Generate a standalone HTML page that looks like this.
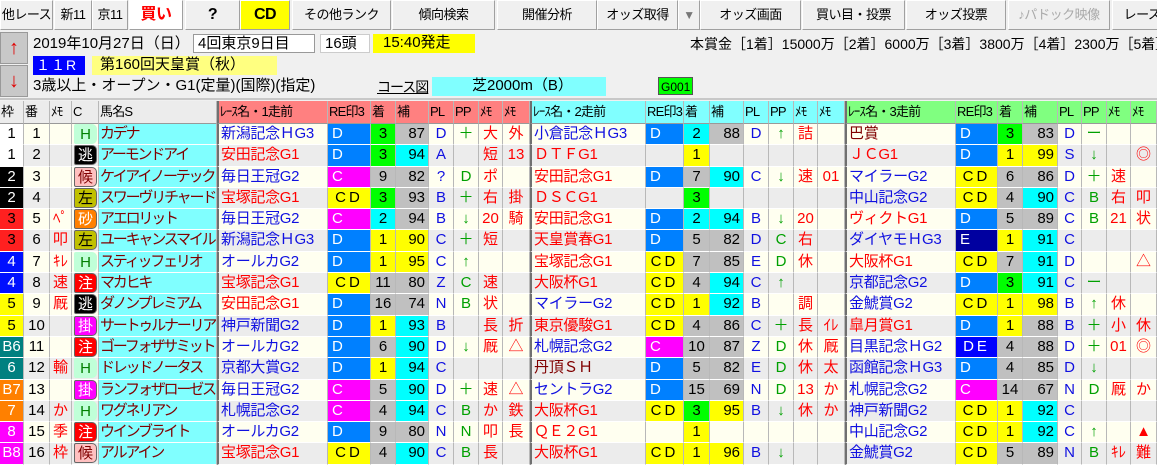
<!DOCTYPE html>
<html><head><meta charset="utf-8">
<style>
*{box-sizing:border-box;margin:0;padding:0}
body{width:1157px;height:464px;overflow:hidden;background:#f0f0f0;font-family:"Liberation Sans","Noto Sans CJK JP",sans-serif;font-size:15px;color:#000;position:relative}
.bt{position:absolute;top:0;height:30px;background:#f0f0f0;border:1px solid #a0a0a0;border-top-color:#fff;border-left-color:#fff;font-size:13px;text-align:center;line-height:28px;white-space:nowrap;overflow:hidden;letter-spacing:-0.5px}
.ab{position:absolute;left:0;width:28px;height:32px;background:#c8c8c8;border:1px solid #999;color:#e00000;text-align:center;font-size:20px;line-height:30px;font-weight:bold}
.t{position:absolute;white-space:nowrap;font-size:15px;line-height:18px}
.bx{position:absolute;height:19px;line-height:18px;font-size:15px;white-space:nowrap;padding-left:4px;overflow:hidden}
#g{position:absolute;left:0;top:101px;width:1157px;display:grid;grid-template-columns:24px 26px 22px 27px 118px 111px 43px 25px 33px 25px 25px 24px 27px 116px 38px 26px 34px 25px 25px 24px 27px 111px 42px 25px 35px 24px 25px 24px 26px;grid-template-rows:23px repeat(16,21.3px)}
.r{display:contents}
.ro{--bg:#fffff0}.re{--bg:#ececec}
#g i{font-style:normal;background:var(--bg);border-right:1px solid #b8b8b8;border-bottom:1px solid #fff;white-space:nowrap;overflow:hidden;line-height:20px;padding:0 2px;text-align:center;font-size:15px}
#g .H{background:#ececec;font-size:13px;text-align:left;border-bottom:1px solid #999;line-height:21px;letter-spacing:-0.8px;padding:0 1px}
#g .H1{background:#ff8080}#g .H2{background:#80ffff}#g .H3{background:#80ff80}
#g .s{border-left:2px solid #707070}
#g .f1{background:#fff}#g .f2{background:#000;color:#fff}#g .f3{background:#ff2020;color:#000}#g .f4{background:#0010ff;color:#fff}#g .f5{background:#ffff00}#g .f6{background:#008080;color:#fff}#g .f7{background:#ff8000;color:#fff}#g .f8{background:#ff00ff;color:#fff}
#g .nm{background:#80ffff;color:#800000;text-align:left;letter-spacing:-2.2px;padding-left:1px;font-size:15px}
#g .bb,#g .br,#g .bm{text-align:left;letter-spacing:-0.3px}
.bb{color:#1010e0}.br{color:#ff0000}.bm{color:#800000}
#g .D{background:#0080ff;color:#fff;text-align:left;padding-left:4px}
#g .C{background:#ff00ff;color:#fff;text-align:left;padding-left:4px}
#g .CD{background:#ffff00;color:#000;letter-spacing:3px}
#g .E{background:#0000a0;color:#fff;text-align:left;padding-left:4px}
#g .DE{background:#0000ff;color:#fff;letter-spacing:3px}
#g .y{background:#ffff00}#g .c{background:#00ffff}#g .g{background:#00ff00}#g .k{background:#c0c0c0}
#g .v{text-align:right;padding-right:3px}
.p{color:#1010e0}.q{color:#00a000}.m{color:#ff0000}
#g .bc{padding:0 0 0 2px;text-align:left}
.bd{display:inline-block;width:23px;height:20px;line-height:19px;border-radius:2px 5px 5px 2px;font-size:15px;text-align:center;border:1px solid #666;vertical-align:top}
.bH{background:#c0ffd8;color:#008000;border-color:#c0ffd8}.bN{background:#000;color:#fff}.bK{background:#ffc0c0;color:#800000}.bL{background:#c0c000;color:#000}.bS{background:#ff8000;color:#fff}.bC{background:#ff0000;color:#fff}.bM{background:#ff00ff;color:#fff}
</style></head><body>
<div class="bt" style="left:0;width:53px">他レース</div>
<div class="bt" style="left:54px;width:38px">新11</div>
<div class="bt" style="left:92px;width:36px">京11</div>
<div class="bt" style="left:129px;width:54px;background:#fff;color:#f00;font-weight:bold;font-size:16px">買い</div>
<div class="bt" style="left:185px;width:55px;font-weight:bold;font-size:16px">?</div>
<div class="bt" style="left:240px;width:50px;background:#ffff00;font-weight:bold;font-size:16px">CD</div>
<div class="bt" style="left:292px;width:99px">その他ランク</div>
<div class="bt" style="left:392px;width:103px">傾向検索</div>
<div class="bt" style="left:497px;width:100px">開催分析</div>
<div class="bt" style="left:597px;width:81px">オッズ取得</div>
<div class="bt" style="left:678px;width:22px;color:#777;font-size:12px">▼</div>
<div class="bt" style="left:700px;width:101px">オッズ画面</div>
<div class="bt" style="left:802px;width:103px">買い目・投票</div>
<div class="bt" style="left:906px;width:100px">オッズ投票</div>
<div class="bt" style="left:1008px;width:102px;color:#aaa">♪パドック映像</div>
<div class="bt" style="left:1112px;width:60px">レース</div>

<div class="ab" style="top:32px">↑</div>
<div class="ab" style="top:65px">↓</div>
<div class="t" style="left:33px;top:35px">2019年10月27日（日）</div>
<div class="bx" style="left:193px;top:34px;width:122px;background:#fff;border:1px solid #999">4回東京9日目</div>
<div class="bx" style="left:320px;top:34px;width:50px;background:#fff;border:1px solid #ccc">16頭</div>
<div class="bx" style="left:373px;top:34px;width:102px;background:#ffff00;padding-left:10px">15:40発走</div>
<div class="bx" style="left:33px;top:56px;width:52px;background:#0000ff;color:#fff;letter-spacing:1px;font-size:14px;padding-left:3px">１１R</div>
<div class="bx" style="left:92px;top:56px;width:185px;background:#ffff80;padding-left:8px">第160回天皇賞（秋）</div>
<div class="t" style="left:33px;top:77px">3歳以上・オープン・G1(定量)(国際)(指定)</div>
<div class="t" style="left:377px;top:78px;text-decoration:underline;font-size:14px;letter-spacing:-1px">コース図</div>
<div class="bx" style="left:432px;top:77px;width:174px;background:#80ffff;padding-left:40px">芝2000m（B）</div>
<div class="bx" style="left:658px;top:77px;width:35px;height:18px;background:#00ff00;border:1px solid #555;font-size:12px;padding-left:2px">G001</div>
<div class="t" style="left:690px;top:35px;font-size:14px">本賞金［1着］15000万［2着］6000万［3着］3800万［4着］2300万［5着］1500万</div>
<div style="position:absolute;left:0;top:98px;width:1157px;height:2px;background:#c8c8c8"></div>

<div id="g">
<div class="r"><i class="H">枠</i><i class="H">番</i><i class="H">ﾒﾓ</i><i class="H">C</i><i class="H">馬名S</i><i class="H H1 s">ﾚｰｽ名・1走前</i><i class="H H1">RE印3</i><i class="H H1">着</i><i class="H H1">補</i><i class="H H1">PL</i><i class="H H1">PP</i><i class="H H1">ﾒﾓ</i><i class="H H1">ﾒﾓ</i><i class="H H2 s">ﾚｰｽ名・2走前</i><i class="H H2">RE印3</i><i class="H H2">着</i><i class="H H2">補</i><i class="H H2">PL</i><i class="H H2">PP</i><i class="H H2">ﾒﾓ</i><i class="H H2">ﾒﾓ</i><i class="H H3 s">ﾚｰｽ名・3走前</i><i class="H H3">RE印3</i><i class="H H3">着</i><i class="H H3">補</i><i class="H H3">PL</i><i class="H H3">PP</i><i class="H H3">ﾒﾓ</i><i class="H H3">ﾒﾓ</i></div>

<div class="r ro"><i class="f1">1</i><i>1</i><i class="m"></i><i class="bc"><span class="bd bH">H</span></i><i class="nm">カデナ</i><i class="bb s">新潟記念ＨG3</i><i class="D">D</i><i class="g">3</i><i class="k v">87</i><i class="p">D</i><i class="q">＋</i><i class="m">大</i><i class="m">外</i><i class="bb s">小倉記念ＨG3</i><i class="D">D</i><i class="c">2</i><i class="k v">88</i><i class="p">D</i><i class="q">↑</i><i class="m">詰</i><i class="m"></i><i class="bm s">巴賞</i><i class="D">D</i><i class="g">3</i><i class="k v">83</i><i class="p">D</i><i class="q">ー</i><i class="m"></i><i class="m"></i></div>

<div class="r re"><i class="f1">1</i><i>2</i><i class="m"></i><i class="bc"><span class="bd bN">逃</span></i><i class="nm">アーモンドアイ</i><i class="br s">安田記念G1</i><i class="D">D</i><i class="g">3</i><i class="c v">94</i><i class="p">A</i><i class="q"></i><i class="m">短</i><i class="m">13</i><i class="br s">ＤＴＦG1</i><i></i><i class="y">1</i><i></i><i></i><i></i><i></i><i></i><i class="br s">ＪＣG1</i><i class="D">D</i><i class="y">1</i><i class="y v">99</i><i class="p">S</i><i class="q">↓</i><i class="m"></i><i class="m">◎</i></div>

<div class="r ro"><i class="f2">2</i><i>3</i><i class="m"></i><i class="bc"><span class="bd bK">候</span></i><i class="nm">ケイアイノーテック</i><i class="bb s">毎日王冠G2</i><i class="C">C</i><i class="k">9</i><i class="k v">82</i><i class="p">?</i><i class="q">D</i><i class="m">ポ</i><i class="m"></i><i class="br s">安田記念G1</i><i class="D">D</i><i class="k">7</i><i class="c v">90</i><i class="p">C</i><i class="q">↓</i><i class="m">速</i><i class="m">01</i><i class="bb s">マイラーG2</i><i class="CD">CD</i><i class="k">6</i><i class="k v">86</i><i class="p">D</i><i class="q">＋</i><i class="m">速</i><i class="m"></i></div>

<div class="r re"><i class="f2">2</i><i>4</i><i class="m"></i><i class="bc"><span class="bd bL">左</span></i><i class="nm">スワーヴリチャード</i><i class="br s">宝塚記念G1</i><i class="CD">CD</i><i class="g">3</i><i class="k v">93</i><i class="p">B</i><i class="q">＋</i><i class="m">右</i><i class="m">掛</i><i class="br s">ＤＳＣG1</i><i></i><i class="g">3</i><i></i><i></i><i></i><i></i><i></i><i class="bb s">中山記念G2</i><i class="CD">CD</i><i class="k">4</i><i class="c v">90</i><i class="p">C</i><i class="q">B</i><i class="m">右</i><i class="m">叩</i></div>

<div class="r ro"><i class="f3">3</i><i>5</i><i class="m">ﾍﾟ</i><i class="bc"><span class="bd bS">砂</span></i><i class="nm">アエロリット</i><i class="bb s">毎日王冠G2</i><i class="C">C</i><i class="c">2</i><i class="k v">94</i><i class="p">B</i><i class="q">↓</i><i class="m">20</i><i class="m">騎</i><i class="br s">安田記念G1</i><i class="D">D</i><i class="c">2</i><i class="c v">94</i><i class="p">B</i><i class="q">↓</i><i class="m">20</i><i class="m"></i><i class="br s">ヴィクトG1</i><i class="D">D</i><i class="k">5</i><i class="k v">89</i><i class="p">C</i><i class="q">B</i><i class="m">21</i><i class="m">状</i></div>

<div class="r re"><i class="f3">3</i><i>6</i><i class="m">叩</i><i class="bc"><span class="bd bL">左</span></i><i class="nm">ユーキャンスマイル</i><i class="bb s">新潟記念ＨG3</i><i class="D">D</i><i class="y">1</i><i class="y v">90</i><i class="p">C</i><i class="q">＋</i><i class="m">短</i><i class="m"></i><i class="br s">天皇賞春G1</i><i class="D">D</i><i class="k">5</i><i class="k v">82</i><i class="p">D</i><i class="q">C</i><i class="m">右</i><i class="m"></i><i class="bb s">ダイヤモＨG3</i><i class="E">E</i><i class="y">1</i><i class="c v">91</i><i class="p">C</i><i class="q"></i><i class="m"></i><i class="m"></i></div>

<div class="r ro"><i class="f4">4</i><i>7</i><i class="m">ｷﾚ</i><i class="bc"><span class="bd bH">H</span></i><i class="nm">スティッフェリオ</i><i class="bb s">オールカG2</i><i class="D">D</i><i class="y">1</i><i class="y v">95</i><i class="p">C</i><i class="q">↑</i><i class="m"></i><i class="m"></i><i class="br s">宝塚記念G1</i><i class="CD">CD</i><i class="k">7</i><i class="k v">85</i><i class="p">E</i><i class="q">D</i><i class="m">休</i><i class="m"></i><i class="br s">大阪杯G1</i><i class="CD">CD</i><i class="k">7</i><i class="c v">91</i><i class="p">D</i><i class="q"></i><i class="m"></i><i class="m">△</i></div>

<div class="r re"><i class="f4">4</i><i>8</i><i class="m">速</i><i class="bc"><span class="bd bC">注</span></i><i class="nm">マカヒキ</i><i class="br s">宝塚記念G1</i><i class="CD">CD</i><i class="k">11</i><i class="k v">80</i><i class="p">Z</i><i class="q">C</i><i class="m">速</i><i class="m"></i><i class="br s">大阪杯G1</i><i class="CD">CD</i><i class="k">4</i><i class="c v">94</i><i class="p">C</i><i class="q">↑</i><i class="m"></i><i class="m"></i><i class="bb s">京都記念G2</i><i class="D">D</i><i class="g">3</i><i class="c v">91</i><i class="p">C</i><i class="q">ー</i><i class="m"></i><i class="m"></i></div>

<div class="r ro"><i class="f5">5</i><i>9</i><i class="m">厩</i><i class="bc"><span class="bd bN">逃</span></i><i class="nm">ダノンプレミアム</i><i class="br s">安田記念G1</i><i class="D">D</i><i class="k">16</i><i class="k v">74</i><i class="p">N</i><i class="q">B</i><i class="m">状</i><i class="m"></i><i class="bb s">マイラーG2</i><i class="CD">CD</i><i class="y">1</i><i class="c v">92</i><i class="p">B</i><i class="q"></i><i class="m">調</i><i class="m"></i><i class="bb s">金鯱賞G2</i><i class="CD">CD</i><i class="y">1</i><i class="y v">98</i><i class="p">B</i><i class="q">↑</i><i class="m">休</i><i class="m"></i></div>

<div class="r re"><i class="f5">5</i><i>10</i><i class="m"></i><i class="bc"><span class="bd bM">掛</span></i><i class="nm">サートゥルナーリア</i><i class="bb s">神戸新聞G2</i><i class="D">D</i><i class="y">1</i><i class="c v">93</i><i class="p">B</i><i class="q"></i><i class="m">長</i><i class="m">折</i><i class="br s">東京優駿G1</i><i class="CD">CD</i><i class="k">4</i><i class="k v">86</i><i class="p">C</i><i class="q">＋</i><i class="m">長</i><i class="m">ｲﾚ</i><i class="br s">皐月賞G1</i><i class="D">D</i><i class="y">1</i><i class="k v">88</i><i class="p">B</i><i class="q">＋</i><i class="m">小</i><i class="m">休</i></div>

<div class="r ro"><i class="f6">B6</i><i>11</i><i class="m"></i><i class="bc"><span class="bd bC">注</span></i><i class="nm">ゴーフォザサミット</i><i class="bb s">オールカG2</i><i class="D">D</i><i class="k">6</i><i class="c v">90</i><i class="p">D</i><i class="q">↓</i><i class="m">厩</i><i class="m">△</i><i class="bb s">札幌記念G2</i><i class="C">C</i><i class="k">10</i><i class="k v">87</i><i class="p">Z</i><i class="q">D</i><i class="m">休</i><i class="m">厩</i><i class="bb s">目黒記念ＨG2</i><i class="DE">DE</i><i class="k">4</i><i class="k v">88</i><i class="p">D</i><i class="q">＋</i><i class="m">01</i><i class="m">◎</i></div>

<div class="r re"><i class="f6">6</i><i>12</i><i class="m">輸</i><i class="bc"><span class="bd bH">H</span></i><i class="nm">ドレッドノータス</i><i class="bb s">京都大賞G2</i><i class="D">D</i><i class="y">1</i><i class="c v">94</i><i class="p">C</i><i class="q"></i><i class="m"></i><i class="m"></i><i class="bm s">丹頂ＳＨ</i><i class="D">D</i><i class="k">5</i><i class="k v">82</i><i class="p">E</i><i class="q">D</i><i class="m">休</i><i class="m">太</i><i class="bb s">函館記念ＨG3</i><i class="D">D</i><i class="k">4</i><i class="k v">85</i><i class="p">D</i><i class="q">↓</i><i class="m"></i><i class="m"></i></div>

<div class="r ro"><i class="f7">B7</i><i>13</i><i class="m"></i><i class="bc"><span class="bd bM">掛</span></i><i class="nm">ランフォザローゼス</i><i class="bb s">毎日王冠G2</i><i class="C">C</i><i class="k">5</i><i class="c v">90</i><i class="p">D</i><i class="q">＋</i><i class="m">速</i><i class="m">△</i><i class="bb s">セントラG2</i><i class="D">D</i><i class="k">15</i><i class="k v">69</i><i class="p">N</i><i class="q">D</i><i class="m">13</i><i class="m">か</i><i class="bb s">札幌記念G2</i><i class="C">C</i><i class="k">14</i><i class="k v">67</i><i class="p">N</i><i class="q">D</i><i class="m">厩</i><i class="m">か</i></div>

<div class="r re"><i class="f7">7</i><i>14</i><i class="m">か</i><i class="bc"><span class="bd bH">H</span></i><i class="nm">ワグネリアン</i><i class="bb s">札幌記念G2</i><i class="C">C</i><i class="k">4</i><i class="c v">94</i><i class="p">C</i><i class="q">B</i><i class="m">か</i><i class="m">鉄</i><i class="br s">大阪杯G1</i><i class="CD">CD</i><i class="g">3</i><i class="y v">95</i><i class="p">B</i><i class="q">↓</i><i class="m">休</i><i class="m">か</i><i class="bb s">神戸新聞G2</i><i class="CD">CD</i><i class="y">1</i><i class="c v">92</i><i class="p">C</i><i class="q"></i><i class="m"></i><i class="m"></i></div>

<div class="r ro"><i class="f8">8</i><i>15</i><i class="m">季</i><i class="bc"><span class="bd bC">注</span></i><i class="nm">ウインブライト</i><i class="bb s">オールカG2</i><i class="D">D</i><i class="k">9</i><i class="k v">80</i><i class="p">N</i><i class="q">N</i><i class="m">叩</i><i class="m">長</i><i class="br s">ＱＥ２G1</i><i></i><i class="y">1</i><i></i><i></i><i></i><i></i><i></i><i class="bb s">中山記念G2</i><i class="CD">CD</i><i class="y">1</i><i class="c v">92</i><i class="p">C</i><i class="q">↑</i><i class="m"></i><i class="m">▲</i></div>

<div class="r re"><i class="f8">B8</i><i>16</i><i class="m">枠</i><i class="bc"><span class="bd bK">候</span></i><i class="nm">アルアイン</i><i class="br s">宝塚記念G1</i><i class="CD">CD</i><i class="k">4</i><i class="c v">90</i><i class="p">C</i><i class="q">B</i><i class="m">長</i><i class="m"></i><i class="br s">大阪杯G1</i><i class="CD">CD</i><i class="y">1</i><i class="y v">96</i><i class="p">B</i><i class="q">↓</i><i class="m"></i><i class="m"></i><i class="bb s">金鯱賞G2</i><i class="CD">CD</i><i class="k">5</i><i class="k v">89</i><i class="p">N</i><i class="q">B</i><i class="m">ｷﾚ</i><i class="m">難</i></div>
</div>
</body></html>
